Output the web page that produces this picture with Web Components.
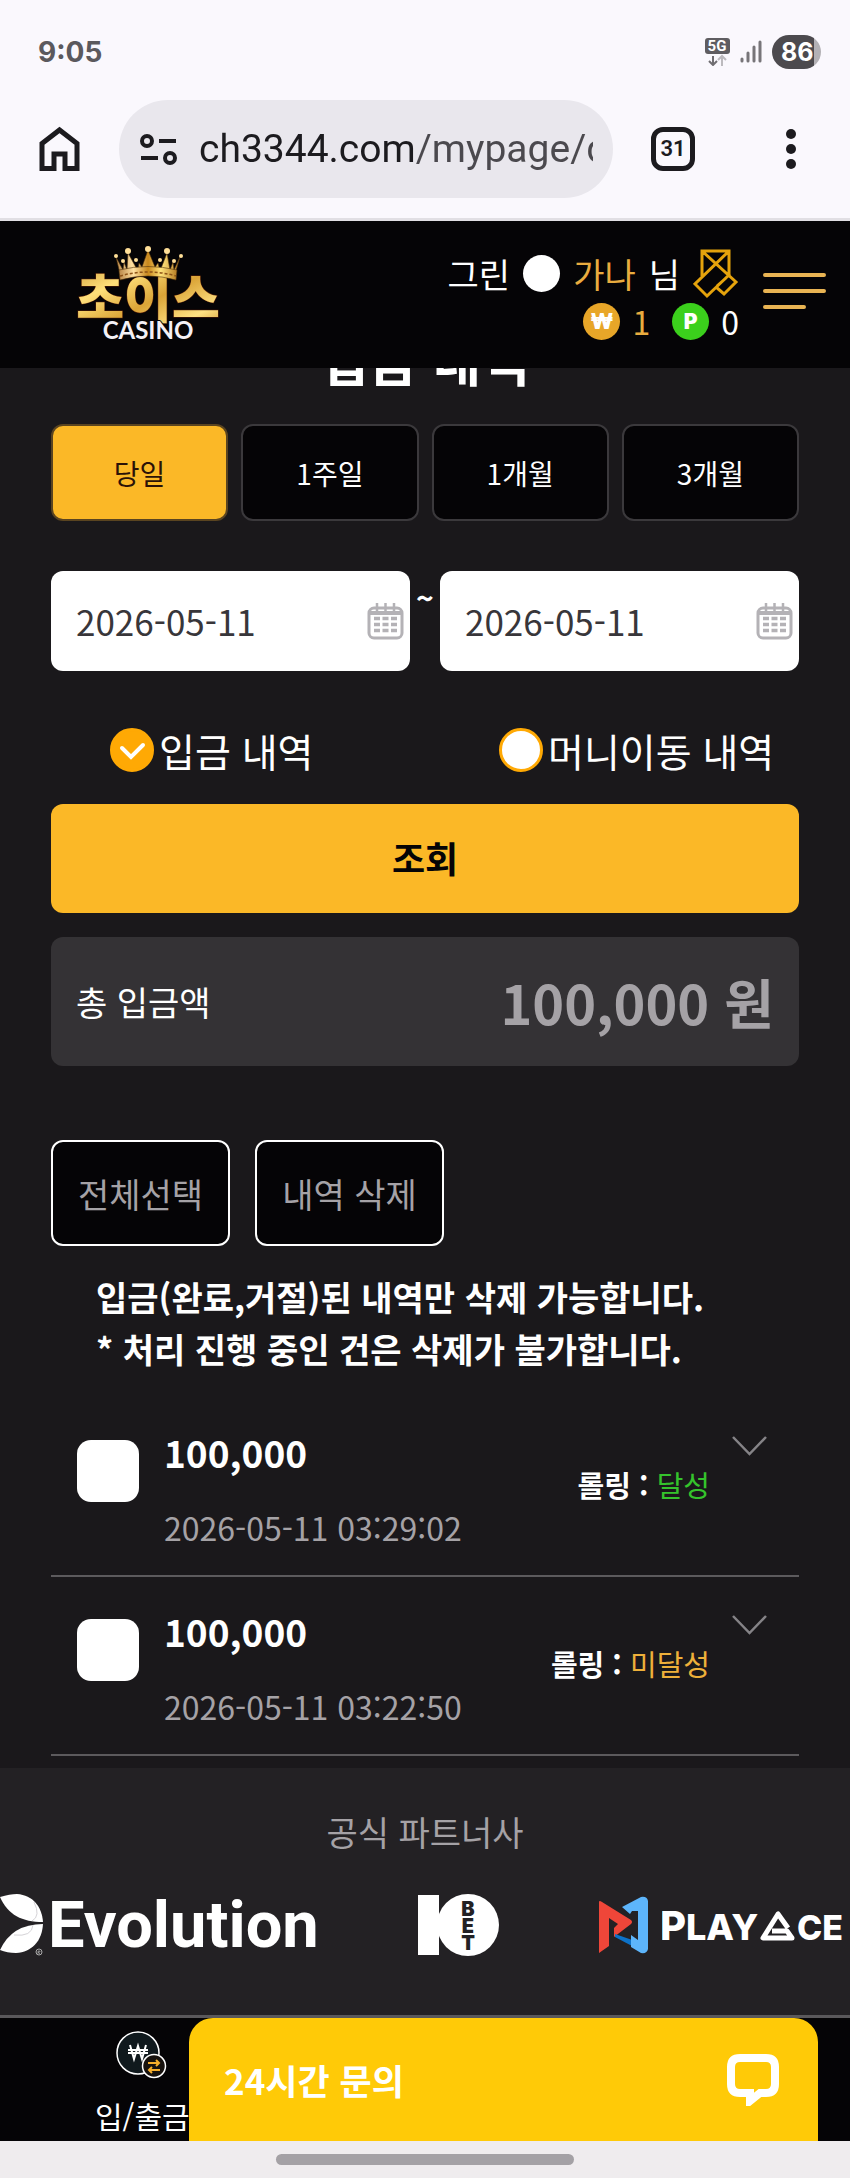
<!DOCTYPE html>
<html lang="ko">
<head>
<meta charset="utf-8">
<meta name="viewport" content="width=device-width, initial-scale=1">
<title>입금 내역</title>
<style>
    :root {
        --font: "Noto Sans CJK KR", "Noto Sans", sans-serif;
        --font-ui: Roboto, "Noto Sans CJK KR", sans-serif;
        --bg-page: #1a181b;
        --bg-dark: #050406;
        --bg-footer: #232124;
        --bg-total: #343235;
        --accent: #fbb827;
        --gold: #e9ac3f;
        --green: #3bd01c;
        --muted: #a5a2a6;
        --chrome: #faf8fd;
        --radius: 12px;
        --gutter: 51px;
    }
    body {
        margin: 0;
        background: var(--bg-page);
        color: #fff;
        font-family: var(--font);
    }
    main {
        padding: 0 var(--gutter) 12px;
    }
</style>
</head>
<body>
<status-bar time="9:05" battery="86"></status-bar>
<browser-bar tabs="31" url="ch3344.com/mypage/deposit"></browser-bar>
<site-header level="그린" user="가나" money="1" point="0"></site-header>
<main>
    <page-title>입금 내역</page-title>
    <period-tabs items="당일,1주일,1개월,3개월"></period-tabs>
    <date-range from="2026-05-11" to="2026-05-11"></date-range>
    <history-kind items="입금 내역,머니이동 내역"></history-kind>
    <search-button>조회</search-button>
    <total-box label="총 입금액">100,000 원</total-box>
    <list-actions items="전체선택,내역 삭제"></list-actions>
    <delete-notice>
        <div>입금(완료,거절)된 내역만 삭제 가능합니다.</div>
        <div>* 처리 진행 중인 건은 삭제가 불가합니다.</div>
    </delete-notice>
    <history-row amount="100,000" date="2026-05-11 03:29:02" state="done">달성</history-row>
    <history-row amount="100,000" date="2026-05-11 03:22:50" state="open">미달성</history-row>
</main>
<partner-list>공식 파트너사</partner-list>
<bottom-bar label="입/출금">
    <chat-widget>24시간 문의</chat-widget>
</bottom-bar>
<gesture-bar></gesture-bar>

<script>
const reset = `
    :host, * { box-sizing: border-box; }
    * { margin: 0; padding: 0; }
    svg { display: block; flex: none; }
    button, input { font: inherit; color: inherit; border: 0; background: none; outline: 0; }
    button { cursor: pointer; }
    a { color: inherit; text-decoration: none; }
`;

class BaseElement extends HTMLElement {
    constructor() {
        super();
        this.attachShadow({ mode: 'open' });
    }

    connectedCallback() {
        this.shadowRoot.innerHTML = `<style>${reset}${this.styles()}</style>${this.render()}`;
    }

    attr(name) {
        return this.getAttribute(name) || '';
    }

    items() {
        return this.attr('items').split(',');
    }
}

// Phone status bar
class StatusBar extends BaseElement {
    styles() {
        return `
            :host {
                display: flex;
                align-items: center;
                justify-content: space-between;
                padding: 32px 29px 0 38px;
                line-height: 40px;
                font-family: Inter, var(--font-ui);
                font-weight: 700;
                font-size: 28px;
                background: var(--chrome);
                color: #5b595d;
            }
            .icons { display: flex; align-items: center; gap: 10px; }
            .battery {
                width: 49px;
                border-radius: 17px;
                line-height: 34px;
                font-size: 25px;
                padding-left: 9px;
                color: #fff;
                background: linear-gradient(90deg, #4c4a4e 42px, #b3b1b5 42px);
            }
        `;
    }

    render() {
        return `
            <span>${this.attr('time')}</span>
            <div class="icons">
                <svg width="25" height="28" viewBox="0 0 25 28">
                    <rect width="25" height="16" rx="3" fill="#5f5d61"/>
                    <text x="12" y="13" text-anchor="middle" font-family="Roboto, sans-serif" font-size="15" font-weight="700" fill="#fff">5G</text>
                    <path d="M8 18v9M4 23l4 4 4-4" fill="none" stroke="#6f6d71" stroke-width="2"/>
                    <path d="M17 28v-9M13 22l4-4 4 4" fill="none" stroke="#bcbabe" stroke-width="2"/>
                </svg>
                <svg width="22" height="24" viewBox="0 0 22 24" stroke="#777579" stroke-width="3" stroke-linecap="round">
                    <path d="M2 19v2M8 13v8M14 7v14M20 2v19"/>
                </svg>
                <span class="battery">${this.attr('battery')}</span>
            </div>
        `;
    }
}

// Browser toolbar with the address pill
class BrowserBar extends BaseElement {
    styles() {
        return `
            :host {
                display: flex;
                align-items: center;
                padding: 28px 50px 20px 38px;
                background: var(--chrome);
                border-bottom: 3px solid #e1dfe4;
                color: #1c1b1f;
                font-family: var(--font-ui);
            }
            .pill {
                flex: 1;
                min-width: 0;
                display: flex;
                align-items: center;
                gap: 21px;
                height: 98px;
                margin: 0 38px;
                padding: 0 20px 0 21px;
                border-radius: 49px;
                background: #e9e7ed;
            }
            input {
                flex: 1;
                min-width: 0;
                height: 60px;
                font-size: 39px;
                color: transparent;
                background: linear-gradient(90deg, #1c1b1f 215px, #4b494e 215px);
                -webkit-background-clip: text;
                background-clip: text;
            }
            .tabs {
                width: 44px;
                height: 44px;
                border: 5px solid #1c1b1f;
                border-radius: 12px;
                font-size: 22px;
                font-weight: 600;
                line-height: 34px;
                text-align: center;
            }
            .menu { margin-left: 87px; }
        `;
    }

    render() {
        return `
            <button aria-label="홈">
                <svg width="43" height="46" viewBox="0 0 43 46" fill="none" stroke="#1c1b1f" stroke-width="5">
                    <path d="M4 17.500 21.500 4 39 17.500V42.500H27V28H16v14.500H4z"/>
                </svg>
            </button>
            <div class="pill">
                <svg width="38" height="34" viewBox="0 0 38 34" fill="none" stroke="#1c1b1f" stroke-width="4">
                    <circle cx="7" cy="9" r="5"/><path d="M19 9h17M1 26h17"/><circle cx="30" cy="26" r="5"/>
                </svg>
                <input type="text" aria-label="주소" value="${this.attr('url')}">
            </div>
            <button class="tabs" aria-label="탭">${this.attr('tabs')}</button>
            <button class="menu" aria-label="메뉴">
                <svg width="18" height="42" viewBox="0 0 18 42" fill="#1c1b1f">
                    <circle cx="9" cy="6" r="5"/><circle cx="9" cy="21" r="5"/><circle cx="9" cy="36" r="5"/>
                </svg>
            </button>
        `;
    }
}

class SiteHeader extends BaseElement {
    styles() {
        return `
            :host {
                position: sticky;
                top: 0;
                z-index: 10;
                display: flex;
                align-items: flex-start;
                height: 147px;
                padding: 24px 24px 0 70px;
                background: var(--bg-dark);
            }
            .user { margin-left: auto; font-size: 34px; line-height: 47px; }
            .line { display: flex; align-items: center; justify-content: flex-end; height: 47px; }
            .name { padding-top: 4px; height: 53px; gap: 13px; }
            .dot { width: 37px; height: 37px; border-radius: 50%; background: #fff; }
            .gold { color: var(--gold); }
            .coins { gap: 12px; font-size: 32px; }
            .coin {
                width: 37px;
                height: 37px;
                border-radius: 50%;
                background: #e8a628;
                color: #fff;
                font-family: Inter, var(--font);
                font-size: 21px;
                font-weight: 900;
                line-height: 37px;
                text-align: center;
            }
            .coin.p { margin-left: 10px; background: var(--green); }
            .burger { margin: 27px 0 0 24px; }
        `;
    }

    render() {
        return `
            <a href="#" aria-label="홈">
                <svg width="156" height="100" viewBox="0 0 156 100">
                    <defs>
                        <linearGradient id="gold" x1="0" y1="0" x2="1" y2="1">
                            <stop offset="0" stop-color="#c8922f"/><stop offset=".3" stop-color="#ffe07a"/>
                            <stop offset=".55" stop-color="#dba437"/><stop offset=".8" stop-color="#ffe283"/>
                            <stop offset="1" stop-color="#c98d2a"/>
                        </linearGradient>
                        <linearGradient id="crown">
                            <stop offset="0" stop-color="#b98748"/><stop offset=".25" stop-color="#ffe0a0"/>
                            <stop offset=".5" stop-color="#c8871b"/><stop offset=".72" stop-color="#ffe27a"/>
                            <stop offset="1" stop-color="#b77d24"/>
                        </linearGradient>
                    </defs>
                    <text x="78" y="73" text-anchor="middle" font-family="Noto Sans CJK KR, sans-serif" font-size="52" font-weight="900" fill="url(#gold)" stroke="#5b2208" stroke-width="1" paint-order="stroke">초이스</text>
                    <g transform="translate(0 7)">
                        <g fill="url(#crown)" stroke="#50330c" stroke-width=".6">
                            <path d="M50 22 46 5l7 13 1-8 3 8 1-17 10 18 1-8 3 4 6-17 7 17 3-4 2 8 7-18 3 17 3-8 1 8 6-13-5 17q-27-8-54 0z"/>
                            <path d="M49 18q29-7 58 0l-1 10q-28-8-56 0z"/>
                        </g>
                        <path d="M50 24q28-8 56 0" fill="none" stroke="#8d5317" stroke-width="1.500" stroke-dasharray="3 2"/>
                        <g fill="#ffdf98">
                            <circle cx="46" cy="4" r="2"/><circle cx="58" cy="-1" r="3"/><circle cx="78" cy="-3" r="3"/>
                            <circle cx="97" cy="-1" r="3"/><circle cx="111" cy="4" r="2"/><circle cx="53" cy="9" r="2"/>
                            <circle cx="66" cy="8" r="2"/><circle cx="90" cy="8" r="2"/><circle cx="104" cy="9" r="2"/>
                        </g>
                    </g>
                    <text x="78" y="94" text-anchor="middle" font-family="Lato, sans-serif" font-size="24" font-weight="700" fill="#f4f1f6" stroke="#050406" stroke-width="2" paint-order="stroke">CASINO</text>
                </svg>
            </a>
            <div class="user">
                <div class="line name">
                    <span>${this.attr('level')}</span><i class="dot"></i>
                    <span class="gold">${this.attr('user')}</span><span>님</span>
                    <svg width="46" height="50" viewBox="-1 0 46 50" fill="none" stroke="#e5a30c" stroke-width="3">
                        <path d="M8 27V2h27v24M8 2l34 31-12 12-8-7M35 2 1 35l12 12 23-22M23 37l9-8"/>
                    </svg>
                </div>
                <div class="line coins">
                    <span class="coin">₩</span><span class="gold">${this.attr('money')}</span>
                    <span class="coin p">P</span><span>${this.attr('point')}</span>
                </div>
            </div>
            <button class="burger" aria-label="전체 메뉴">
                <svg width="63" height="38" viewBox="0 0 63 38" stroke="#e9b453" stroke-width="4" stroke-linecap="round">
                    <path d="M2 3h59M2 19h59M2 35h39"/>
                </svg>
            </button>
        `;
    }
}

// Scrolled partly under the sticky header
class PageTitle extends BaseElement {
    styles() {
        return `
            :host { display: block; margin-top: -39px; }
            h1 { font-size: 53px; line-height: 60px; font-weight: 700; text-align: center; }
        `;
    }

    render() {
        return '<h1><slot></slot></h1>';
    }
}

class PeriodTabs extends BaseElement {
    styles() {
        return `
            :host { display: flex; gap: 13px; margin-top: 35px; }
            button {
                flex: 1;
                height: 97px;
                font-size: 28px;
                border: 2px solid #3b393c;
                border-radius: var(--radius);
                background: var(--bg-dark);
            }
            button[aria-pressed="true"] { background: var(--accent); border-color: #5a4420; color: #2b1207; }
        `;
    }

    render() {
        return this.items().map((text, i) => `<button aria-pressed="${i === 0}">${text}</button>`).join('');
    }
}

class DateRange extends BaseElement {
    styles() {
        return `
            :host {
                display: grid;
                grid-template-columns: minmax(0, 1fr) 30px minmax(0, 1fr);
                margin-top: 50px;
            }
            .field {
                display: flex;
                align-items: center;
                height: 100px;
                padding: 0 6px 0 25px;
                border-radius: var(--radius);
                background: #fff;
            }
            input { flex: 1; min-width: 0; font-size: 35px; line-height: 50px; color: #38363a; }
            .to { font-size: 30px; font-weight: 700; line-height: 52px; text-align: center; }
        `;
    }

    field(label, value) {
        return `
            <div class="field">
                <input type="text" aria-label="${label}" value="${value}">
                <svg width="37" height="38" viewBox="0 0 37 38" fill="none" stroke="#b4b2b6" stroke-width="3">
                    <rect x="2" y="6" width="33" height="30" rx="5"/>
                    <path d="M2 11h33" stroke-width="4"/>
                    <path d="M10 1v10M18.500 1v10M27 1v10" stroke-width="2.500"/>
                    <path d="M7 16.500h23M7 22.500h23M7 28.500h23" stroke-width="3.500" stroke-dasharray="6 2.500"/>
                </svg>
            </div>
        `;
    }

    render() {
        return this.field('시작일', this.attr('from')) + '<span class="to">~</span>' + this.field('종료일', this.attr('to'));
    }
}

class HistoryKind extends BaseElement {
    styles() {
        return `
            :host {
                display: grid;
                grid-template-columns: 1fr 1fr;
                column-gap: 30px;
                margin-top: 50px;
            }
            label {
                display: flex;
                align-items: center;
                gap: 5px;
                padding-left: 59px;
                font-size: 39px;
                line-height: 58px;
                white-space: nowrap;
            }
            input {
                appearance: none;
                flex: none;
                width: 44px;
                height: 44px;
                border: 3px solid #ffa904;
                border-radius: 50%;
                background: #fff;
            }
            /* tick drawn over the filled radio */
            .box { position: relative; display: flex; }
            .box svg { position: absolute; inset: 0; pointer-events: none; }
            input:checked { background: #ffa904; }
            input:not(:checked) + svg { display: none; }
        `;
    }

    render() {
        return this.items().map((text, i) => `
            <label>
                <span class="box">
                    <input type="radio" name="kind" ${i === 0 ? 'checked' : ''}>
                    <svg width="44" height="44" viewBox="0 0 44 44" fill="none" stroke="#fff" stroke-width="4" stroke-linecap="round">
                        <path d="m12 20 9 9 12-12"/>
                    </svg>
                </span>
                <span>${text}</span>
            </label>
        `).join('');
    }
}

class SearchButton extends BaseElement {
    styles() {
        return `
            :host { display: block; margin-top: 25px; }
            button {
                width: 100%;
                height: 109px;
                padding-bottom: 4px;
                border-radius: var(--radius);
                background: var(--accent);
                color: #050406;
                font-size: 36px;
                font-weight: 700;
            }
        `;
    }

    render() {
        return '<button><slot></slot></button>';
    }
}

class TotalBox extends BaseElement {
    styles() {
        return `
            :host {
                display: flex;
                align-items: center;
                justify-content: space-between;
                height: 129px;
                margin-top: 24px;
                padding: 0 25px;
                border-radius: var(--radius);
                background: var(--bg-total);
                font-size: 34px;
            }
            strong { font-size: 54px; font-weight: 700; color: var(--muted); }
        `;
    }

    render() {
        return `<span>${this.attr('label')}</span><strong><slot></slot></strong>`;
    }
}

class ListActions extends BaseElement {
    styles() {
        return `
            :host { display: flex; gap: 25px; margin-top: 74px; }
            button {
                height: 106px;
                padding: 0 25px;
                border: 2px solid #fff;
                border-radius: var(--radius);
                background: var(--bg-dark);
                color: var(--muted);
                font-size: 34px;
            }
        `;
    }

    render() {
        return this.items().map(text => `<button>${text}</button>`).join('');
    }
}

class DeleteNotice extends BaseElement {
    styles() {
        return `
            :host {
                display: block;
                margin: 25px 0 23px;
                padding-left: 45px;
                font-size: 34px;
                font-weight: 700;
                line-height: 52px;
            }
        `;
    }

    render() {
        return '<slot></slot>';
    }
}

class HistoryRow extends BaseElement {
    styles() {
        return `
            :host {
                display: flex;
                align-items: flex-start;
                padding: 30px 32px 24px 26px;
                border-bottom: 2px solid #5c5a5d;
            }
            input {
                appearance: none;
                flex: none;
                width: 62px;
                height: 62px;
                margin: 12px 25px 0 0;
                border-radius: 14px;
                background: #fff;
            }
            .info { display: grid; gap: 27px; line-height: 48px; }
            .amount { font-size: 37px; font-weight: 700; }
            .date { font-size: 32px; color: var(--muted); }
            .rolling { margin: 32px 0 0 auto; font-size: 29px; line-height: 48px; }
            .rolling b { font-weight: 700; }
            .rolling em { font-style: normal; }
            :host([state="done"]) em { color: #35c32c; }
            :host([state="open"]) em { color: #eeb03a; }
            .more { margin: 8px 0 0 22px; }
        `;
    }

    render() {
        return `
            <input type="checkbox" aria-label="${this.attr('date')}">
            <div class="info">
                <span class="amount">${this.attr('amount')}</span>
                <span class="date">${this.attr('date')}</span>
            </div>
            <span class="rolling"><b>롤링 :</b> <em><slot></slot></em></span>
            <button class="more" aria-label="상세">
                <svg width="35" height="20" viewBox="0 0 35 20" fill="none" stroke="#858387" stroke-width="2.500">
                    <path d="m1 1 16.500 17L34 1"/>
                </svg>
            </button>
        `;
    }
}

class PartnerList extends BaseElement {
    styles() {
        return `
            :host { display: block; padding: 39px 0 59px; background: var(--bg-footer); }
            h2 { font-size: 34px; line-height: 50px; font-weight: 400; text-align: center; color: var(--muted); }
            .logos {
                display: flex;
                justify-content: space-between;
                align-items: center;
                height: 62px;
                margin-top: 37px;
                padding-right: 5px;
            }
            .logo { display: flex; align-items: center; }
            .evo { gap: 5px; font-family: var(--font-ui); font-size: 65px; font-weight: 700; line-height: 62px; }
            .ace { gap: 14px; }
        `;
    }

    render() {
        return `
            <h2><slot></slot></h2>
            <div class="logos">
                <a class="logo evo" href="#">
                    <svg width="43" height="62" viewBox="0 0 43 62">
                        <path d="M0 3Q10 0 17 0c16 1 25 13 26 28C22 28 8 21 0 3z" fill="#fff"/>
                        <path d="M43 30c-1 17-11 28-27 29Q7 59 0 56 12 30 43 30z" fill="#fff"/>
                        <path d="M34 8q7 14-2 19M14 41q18 2 19-10" fill="none" stroke="#d5d3d7" stroke-width="1"/>
                        <circle cx="39" cy="58" r="3" fill="none" stroke="#aaa" stroke-width="1"/>
                        <path d="M38 60v-3h2v1h-2l2 2" fill="none" stroke="#aaa" stroke-width=".7"/>
                    </svg>
                    <span>Evolution</span>
                </a>
                <a class="logo" href="#">
                    <svg width="81" height="62" viewBox="0 0 81 62">
                        <path d="M0 1h21v60H0z" fill="#fff"/>
                        <circle cx="50" cy="31" r="31" fill="#fff"/>
                        <g font-family="Inter, sans-serif" font-size="20" font-weight="900" fill="#232124" text-anchor="middle">
                            <text x="50" y="22">B</text><text x="50" y="39">E</text><text x="50" y="56">T</text>
                        </g>
                    </svg>
                </a>
                <a class="logo ace" href="#">
                    <svg width="50" height="58" viewBox="0 0 50 58">
                        <path d="M1 6q0-2 3 0l29 18q2 2 0 4L16 41V32l4-4-9-6v28l-10 7z" fill="#ef4639"/>
                        <path d="M17 38 40 46v7l-6-3-17-9z" fill="#0d72c9"/>
                        <path d="M24 11 43 1q6-1 7 4v48q-1 5-7 4l-10-6V39l7 5V15l-6 0-2 3z" fill="#5db5fb"/>
                    </svg>
                    <svg width="183" height="32" viewBox="0 0 183 32" fill="#fff" font-family="Inter, sans-serif" font-weight="800">
                        <text x="-2" y="31" font-size="40">P</text>
                        <text x="24" y="31" font-size="36">LAY</text>
                        <path d="m126 19-10-14-15 24h29l-5-7h-15" fill="none" stroke="#fff" stroke-width="5" stroke-linejoin="round"/>
                        <text x="135" y="31" font-size="34">CE</text>
                    </svg>
                </a>
            </div>
        `;
    }
}

class BottomBar extends BaseElement {
    styles() {
        return `
            :host {
                position: relative;
                display: block;
                height: 126px;
                border-top: 3px solid #5a585b;
                background: var(--bg-dark);
            }
            a { display: inline-grid; gap: 13px; padding: 13px 0 0 95px; }
            svg { margin-left: 21px; }
            span { font-size: 30px; line-height: 46px; }
        `;
    }

    render() {
        return `
            <a href="#">
                <svg width="51" height="48" viewBox="0 0 51 48">
                    <circle cx="22" cy="22" r="21" fill="#10191d" stroke="#fff" stroke-width="1.500"/>
                    <path d="m14 14 4 14 4-13 4 13 4-14M12 19h20M12 22h20" fill="none" stroke="#fff" stroke-width="2"/>
                    <circle cx="38" cy="35" r="11.500" fill="#17120e" stroke="#fff" stroke-width="1.500"/>
                    <path d="M32 32h11M40 29l3 3-3 3M44 39H33M36 36l-3 3 3 3" fill="none" stroke="#f5ae2b" stroke-width="2"/>
                </svg>
                <span>${this.attr('label')}</span>
            </a>
            <slot></slot>
        `;
    }
}

// Floats over the right side of the bottom bar
class ChatWidget extends BaseElement {
    styles() {
        return `
            :host { position: absolute; top: 0; bottom: 0; left: 189px; right: 32px; }
            button {
                display: flex;
                align-items: center;
                justify-content: space-between;
                width: 100%;
                height: 100%;
                padding: 0 38px 0 35px;
                border-radius: 24px 24px 0 0;
                background: #ffca07;
                font-size: 35px;
                font-weight: 700;
            }
        `;
    }

    render() {
        return `
            <button>
                <slot></slot>
                <svg width="54" height="52" viewBox="0 0 54 52" fill="none" stroke="#fff" stroke-width="8">
                    <path d="M14 4h26q9 0 9 9v17q0 9-9 9h-6l-10 8v-8H14q-9 0-9-9V13q0-9 9-9z"/>
                </svg>
            </button>
        `;
    }
}

class GestureBar extends BaseElement {
    styles() {
        return `
            :host { display: flex; justify-content: center; padding: 13px 0; background: #efecee; }
            i { width: 35%; height: 11px; border-radius: 6px; background: #a4a1a5; }
        `;
    }

    render() {
        return '<i></i>';
    }
}

customElements.define('status-bar', StatusBar);
customElements.define('browser-bar', BrowserBar);
customElements.define('site-header', SiteHeader);
customElements.define('page-title', PageTitle);
customElements.define('period-tabs', PeriodTabs);
customElements.define('date-range', DateRange);
customElements.define('history-kind', HistoryKind);
customElements.define('search-button', SearchButton);
customElements.define('total-box', TotalBox);
customElements.define('list-actions', ListActions);
customElements.define('delete-notice', DeleteNotice);
customElements.define('history-row', HistoryRow);
customElements.define('partner-list', PartnerList);
customElements.define('bottom-bar', BottomBar);
customElements.define('chat-widget', ChatWidget);
customElements.define('gesture-bar', GestureBar);
</script>
</body>
</html>
